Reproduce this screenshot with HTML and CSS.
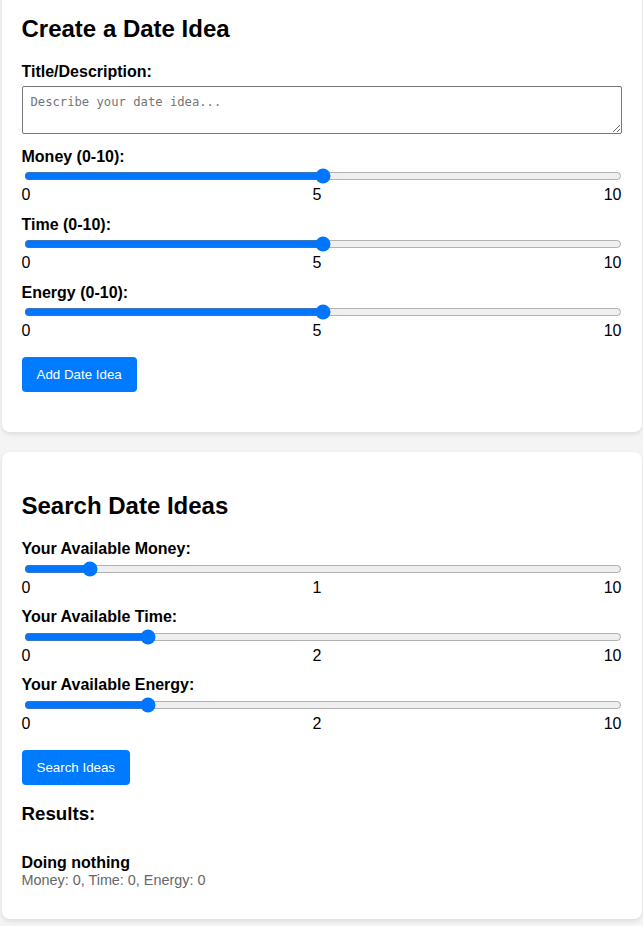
FILE: index.html
```html
<!DOCTYPE html>
<html lang="en">
<head>
<meta charset="utf-8">
<title>Date Ideas</title>
<link rel="stylesheet" href="styles.css">
</head>
<body>
<div class="app">
  <section class="card">
    <h2>Create a Date Idea</h2>
    <div class="group group-text">
      <label class="lbl lbl-text" for="desc">Title/Description:</label>
      <textarea id="desc" rows="2" placeholder="Describe your date idea..."></textarea>
    </div>
    <div class="group range-group">
      <label class="lbl">Money (0-10):</label>
      <input type="range" min="0" max="10" value="5">
      <div class="ticks"><span>0</span><span>5</span><span>10</span></div>
    </div>
    <div class="group range-group">
      <label class="lbl">Time (0-10):</label>
      <input type="range" min="0" max="10" value="5">
      <div class="ticks"><span>0</span><span>5</span><span>10</span></div>
    </div>
    <div class="group range-group">
      <label class="lbl">Energy (0-10):</label>
      <input type="range" min="0" max="10" value="5">
      <div class="ticks"><span>0</span><span>5</span><span>10</span></div>
    </div>
    <div class="actions actions-create">
      <button class="btn">Add Date Idea</button>
    </div>
  </section>

  <section class="card">
    <h2>Search Date Ideas</h2>
    <div class="group range-group">
      <label class="lbl">Your Available Money:</label>
      <input type="range" min="0" max="10" value="1">
      <div class="ticks"><span>0</span><span>1</span><span>10</span></div>
    </div>
    <div class="group range-group">
      <label class="lbl">Your Available Time:</label>
      <input type="range" min="0" max="10" value="2">
      <div class="ticks"><span>0</span><span>2</span><span>10</span></div>
    </div>
    <div class="group range-group">
      <label class="lbl">Your Available Energy:</label>
      <input type="range" min="0" max="10" value="2">
      <div class="ticks"><span>0</span><span>2</span><span>10</span></div>
    </div>
    <div class="actions">
      <button class="btn">Search Ideas</button>
    </div>
    <h3>Results:</h3>
    <div class="result">
      <div class="result-title">Doing nothing</div>
      <div class="result-meta">Money: 0, Time: 0, Energy: 0</div>
    </div>
  </section>
</div>
</body>
</html>
```
FILE: styles.css
```css
html, body {
  margin: 0;
  padding: 0;
}
body {
  background: #f4f4f4;
  font-family: "Liberation Sans", Arial, sans-serif;
  font-size: 16px;
  color: #000;
}
.app {
  margin-top: -25px;
}
.card {
  max-width: 600px;
  margin: 0 auto 20px;
  padding: 20px;
  background: #fff;
  border-radius: 8px;
  box-shadow: 0 2px 5px rgba(0, 0, 0, 0.1);
}
h2 {
  font-size: 24px;
  font-weight: bold;
  margin: 19.92px 0;
}
h3 {
  font-size: 18.72px;
  font-weight: bold;
  margin: 18.72px 0;
}
.group {
  margin-bottom: 10px;
}
.group-text {
  margin-bottom: 13.8px;
}
.range-group {
  margin-bottom: 11.2px;
}
.lbl {
  display: block;
  font-weight: bold;
  line-height: 18.4px;
}
.lbl-text {
  margin-bottom: 5px;
}
textarea {
  display: block;
  width: 100%;
  height: 48px;
  box-sizing: border-box;
  padding: 8px;
  border: 1px solid #767676;
  border-radius: 2px;
  font-family: "DejaVu Sans Mono", "Liberation Mono", monospace;
  font-size: 12.2px;
  margin: 0;
  resize: vertical;
}
textarea::placeholder {
  color: #757575;
}
input[type="range"] {
  display: block;
  width: calc(100% - 2px);
  height: 16px;
  margin: 2px 0 2px 2px;
}
.ticks {
  display: flex;
  justify-content: space-between;
  line-height: 18.4px;
}
.actions {
  margin-top: 16.6px;
}
.actions-create {
  margin-bottom: 20px;
}
.btn {
  display: inline-block;
  background: #007bff;
  color: #fff;
  border: none;
  border-radius: 4px;
  padding: 10px 15px;
  height: 35px;
  font-family: "Liberation Sans", Arial, sans-serif;
  font-size: 13.333px;
  line-height: 15px;
  cursor: pointer;
}
.result {
  padding: 10px 0;
}
.result-title {
  font-weight: bold;
  line-height: 18.4px;
}
.result-meta {
  font-size: 14.4px;
  color: #666;
  line-height: 16.56px;
}
```
